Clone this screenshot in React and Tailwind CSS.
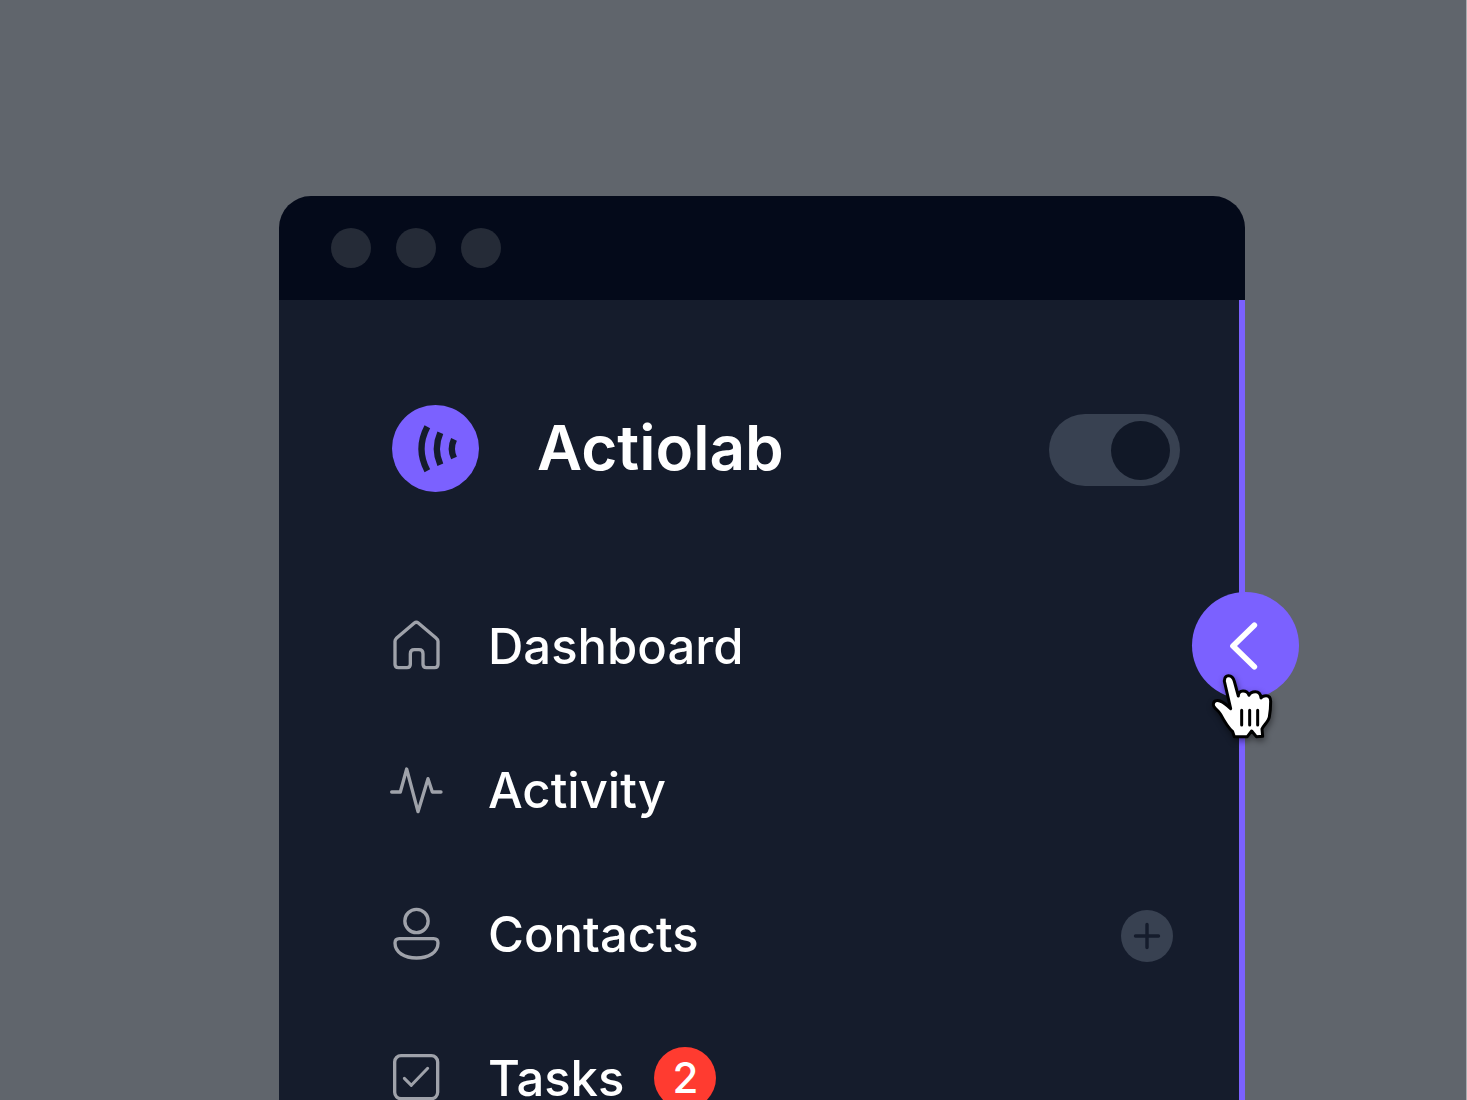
function Icon({ viewBox, children }) {
  return (
    <svg
      className="size-[52px] shrink-0 overflow-visible text-[#9fa2aa]"
      viewBox={viewBox}
      fill="none"
      stroke="currentColor"
      strokeWidth="10"
      strokeLinecap="round"
      strokeLinejoin="round"
      aria-hidden="true"
    >
      {children}
    </svg>
  );
}

const HomeIcon = () => (
  <Icon viewBox="30 45 156 156">
    <path d="M45 109 Q45 104 49 100 L103 54 Q109 49 115 54 L169 100 Q174 104 174 109 V178 Q174 188 164 188 H139 Q129 188 129 178 V146 Q129 134 117 134 H103 Q91 134 91 146 V178 Q91 188 81 188 H55 Q45 188 45 178 Z" />
  </Icon>
);

const ActivityIcon = () => (
  <Icon viewBox="30 27 156 156">
    <path d="M35 111 H61 L80 42 L114 170 L144 71 L157 111 H183" />
  </Icon>
);

const ContactsIcon = () => (
  <Icon viewBox="30 39 156 156">
    <circle cx="109.5" cy="78" r="35" />
    <path d="M58 131 H161 Q174 131 174 144 C174 172 146 189 109.500 189 C73 189 45 172 45 144 Q45 131 58 131 Z" />
  </Icon>
);

const TasksIcon = () => (
  <Icon viewBox="30 36 156 156">
    <rect x="44" y="47" width="129" height="129" rx="19" />
    <path d="M73 115 L94 136 L143 85" strokeWidth="9" />
  </Icon>
);

const items = [
  { label: "Dashboard", icon: HomeIcon },
  { label: "Activity", icon: ActivityIcon },
  { label: "Contacts", icon: ContactsIcon, add: true },
  { label: "Tasks", icon: TasksIcon, count: 2 },
];

function NavItem({ item }) {
  const Glyph = item.icon;
  return (
    <li className="flex h-36 items-center justify-between pr-[66px]">
      <a href="#" className="flex items-center gap-[46px] text-[49px] leading-none font-medium">
        <Glyph />
        <span>{item.label}</span>
        {item.count && (
          <span className="-ml-4 flex size-[62px] items-center justify-center rounded-full bg-[#ff3b30] text-[42px]">
            {item.count}
          </span>
        )}
      </a>
      {item.add && (
        <button
          type="button"
          aria-label={`Add to ${item.label}`}
          className="mt-1 size-[52px] rounded-full bg-[#384151] text-[#151c2c]"
        >
          <svg viewBox="0 0 52 52" fill="none" stroke="currentColor" strokeWidth="3.4" strokeLinecap="round">
            <path d="M26 14.500V37.500M14.500 26H37.500" />
          </svg>
        </button>
      )}
    </li>
  );
}

export default function App() {
  return (
    <div className="flex h-screen overflow-hidden border-r border-[#a9acb0] bg-[#60656c] pt-[196px] pr-[221px] pl-[279px] font-['Inter',sans-serif] text-white">
      <div className="flex min-w-0 flex-1 flex-col">
        <div className="flex h-[104px] shrink-0 items-center gap-[25px] rounded-t-[32px] bg-[#040a1a] pl-[52px]">
          <span className="size-10 rounded-full bg-[#252b37]" />
          <span className="size-10 rounded-full bg-[#252b37]" />
          <span className="size-10 rounded-full bg-[#252b37]" />
        </div>

        <aside className="relative flex-1 border-r-[6px] border-[#7b61ff] bg-[#151c2c] pt-[104px] pl-[111px]">
          <header className="flex h-[88px] items-center justify-between pr-[59px]">
            <div className="flex items-center gap-[58px]">
              <svg className="ml-0.5 size-[87px]" viewBox="36 42 261 261" aria-hidden="true">
                <circle cx="166.5" cy="172.500" r="130.500" fill="#7b61ff" />
                <g fill="none" stroke="#151c2c" strokeWidth="19">
                  <path d="M142 107 Q107 173 142 239" />
                  <path d="M181 125 Q160 173 181 221" />
                  <path d="M222 145 Q209 173 222 201" />
                </g>
              </svg>
              <h1 className="text-[62px] leading-none font-semibold">Actiolab</h1>
            </div>
            <label className="relative mt-1 flex h-[72px] w-[131px] items-center justify-end rounded-full bg-[#384151] pr-2.5">
              <input type="checkbox" role="switch" defaultChecked aria-label="Theme" className="absolute inset-0 size-full cursor-pointer opacity-0" />
              <span className="size-[59px] rounded-full bg-[#111827]" />
            </label>
          </header>

          <nav className="mt-[82px]">
            <ul>
              {items.map((item) => (
                <NavItem key={item.label} item={item} />
              ))}
            </ul>
          </nav>

          <button
            type="button"
            aria-label="Collapse sidebar"
            className="absolute top-[292px] -right-[60px] size-[107px] rounded-full bg-[#7b61ff]"
          >
            <svg viewBox="36 36 321 321" fill="none" stroke="white" strokeWidth="17" strokeLinecap="round" strokeLinejoin="round">
              <path d="M223 136 L159 198 L223 260" />
            </svg>
          </button>

          <svg
            className="pointer-events-none absolute top-[368px] -right-[39px] h-[80px] w-[70px] drop-shadow-[1px_3px_3px_rgba(0,0,0,0.45)]"
            viewBox="85 264 210 240"
            fill="white"
            stroke="black"
            strokeWidth="9"
            strokeLinejoin="round"
            strokeLinecap="round"
            aria-hidden="true"
          >
            <path d="M153 386 L136 312 C131 296 137 287 147 287 C156 287 161 293 164 304 L176 348 C176 338 182 333 190 333 C199 333 205 337 208 346 C211 338 218 335 227 335 C237 335 243 341 244 354 C247 349 252 347 259 347 C268 347 273 353 273 364 C273 380 272 395 269 411 C266 426 250 437 247 447 L249 469 L230 470 L216 453 L203 470 L164 470 L159 455 C145 442 134 424 123 403 C117 391 101 384 101 374 C101 363 111 359 121 363 C134 368 144 377 153 386 Z" />
            <path d="M186 391V435M210 391V435M234 391V435" />
          </svg>
        </aside>
      </div>
    </div>
  );
}
